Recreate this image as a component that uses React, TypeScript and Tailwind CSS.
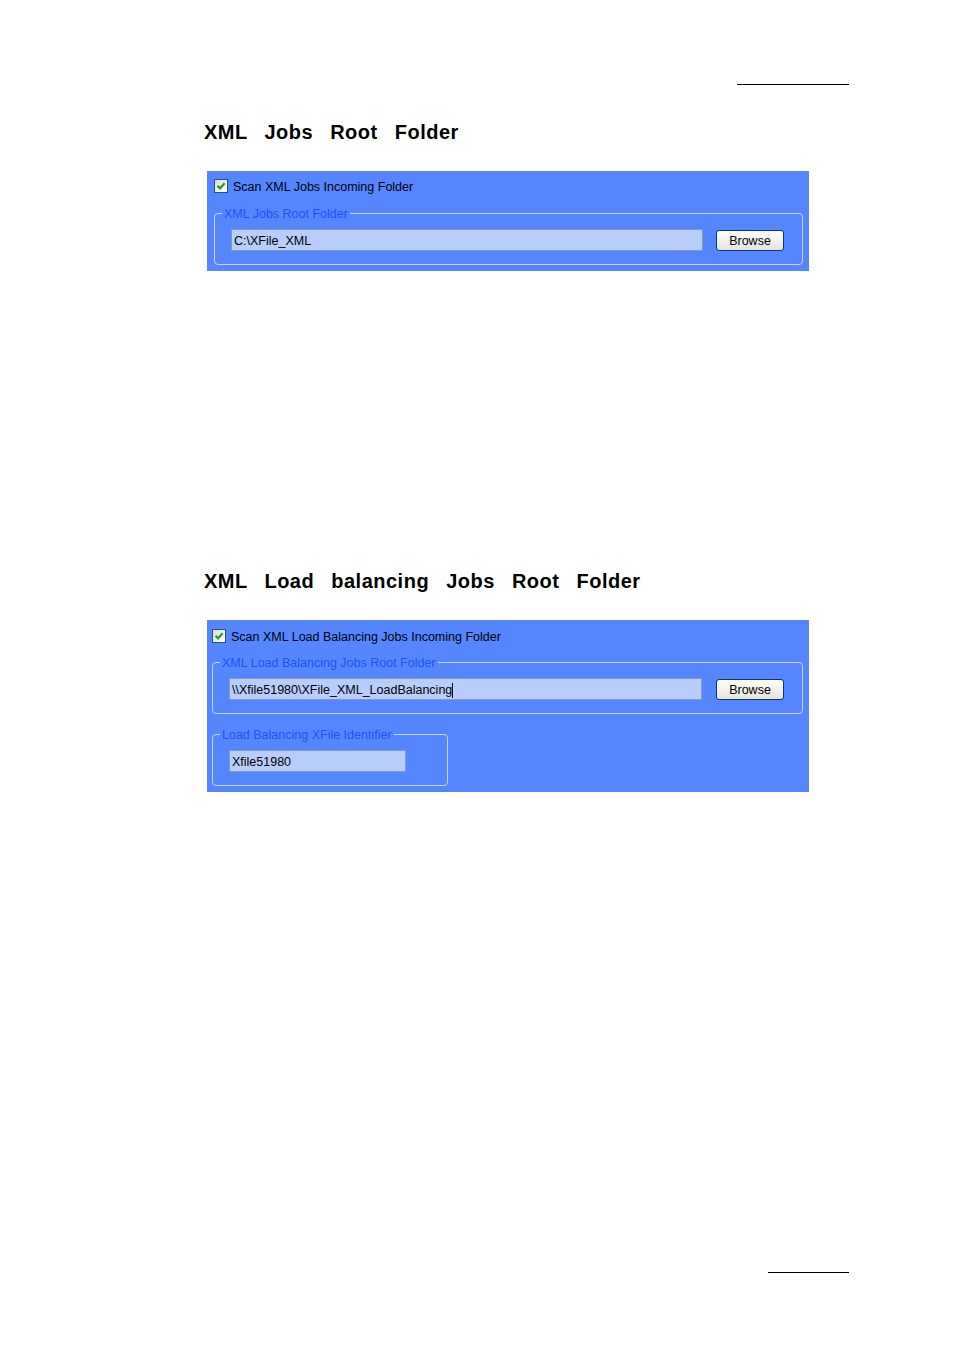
import React from 'react';

const PANEL_BG = 'bg-[#5586ff]';

const Checkbox: React.FC = () => (
  <div className="w-[14px] h-[14px] shrink-0 border border-[#1c5180] bg-gradient-to-br from-[#dcdcd6] to-white flex items-center justify-center">
    <svg width="10" height="10" viewBox="0 0 10 10">
      <path d="M1.5 4.8 L4 7.3 L8.6 2.3" stroke="#21a121" strokeWidth="2.2" fill="none" />
    </svg>
  </div>
);

const TextBox: React.FC<{ value: string; width: string; caret?: boolean }> = ({ value, width, caret }) => (
  <div className={`${width} h-[22px] shrink-0 bg-[#b9cdfb] border border-[#7f9db9] pl-[2px] pt-[2px] flex items-center text-[12.5px] text-black`}>
    <span>{value}</span>
    {caret && <span className="w-px h-[15px] bg-black" />}
  </div>
);

const BrowseButton: React.FC = () => (
  <button className="mt-px w-[68px] h-[21px] shrink-0 rounded-[3px] border border-[#003c74] bg-gradient-to-b from-white to-[#e6e3d6] pt-[2px] text-[12.5px] text-black flex items-center justify-center">
    Browse
  </button>
);

const Group: React.FC<{ legend: string; className: string; children: React.ReactNode }> = ({ legend, className, children }) => (
  <div className={`relative h-[52px] border border-[#c8d4ee] rounded-[4px] pl-[16px] pt-[15px] ${className}`}>
    <span className={`absolute left-[7px] top-[-7px] px-[2px] ${PANEL_BG} text-[12.5px] leading-[14px] text-[#2052f6]`}>{legend}</span>
    <div className="flex items-start">{children}</div>
  </div>
);

const Heading: React.FC<{ text: string; className: string }> = ({ text, className }) => (
  <h2 className={`ml-[204px] text-[20px] leading-[24px] font-bold text-black tracking-[0.5px] [word-spacing:11px] ${className}`}>{text}</h2>
);

export default function App() {
  return (
    <div className="w-[954px] min-h-[1350px] bg-white pt-[84px] font-['Liberation_Sans',Arial,sans-serif]">
      <div className="ml-[737px] w-[112px] h-px bg-black" />

      <Heading text="XML Jobs Root Folder" className="mt-[35px]" />

      <div className={`mt-[27px] ml-[207px] w-[602px] h-[100px] ${PANEL_BG} pt-[8px]`}>
        <div className="pl-[7px] flex items-center gap-[5px] h-[14px]">
          <Checkbox />
          <span className="pt-[3px] text-[12.5px] text-black">Scan XML Jobs Incoming Folder</span>
        </div>
        <Group legend="XML Jobs Root Folder" className="mt-[20px] ml-[7px] mr-[6px]">
          <TextBox value="C:\XFile_XML" width="w-[472px]" />
          <div className="ml-[13px]">
            <BrowseButton />
          </div>
        </Group>
      </div>

      <Heading text="XML Load balancing Jobs Root Folder" className="mt-[298px]" />

      <div className={`mt-[27px] ml-[207px] w-[602px] h-[172px] ${PANEL_BG} pt-[9px]`}>
        <div className="pl-[5px] flex items-center gap-[5px] h-[14px]">
          <Checkbox />
          <span className="pt-[3px] text-[12.5px] text-black">Scan XML Load Balancing Jobs Incoming Folder</span>
        </div>
        <Group legend="XML Load Balancing Jobs Root Folder" className="mt-[19px] ml-[5px] mr-[6px]">
          <TextBox value="\\Xfile51980\XFile_XML_LoadBalancing" width="w-[473px]" caret />
          <div className="ml-[14px]">
            <BrowseButton />
          </div>
        </Group>
        <Group legend="Load Balancing XFile Identifier" className="mt-[20px] ml-[5px] w-[236px]">
          <TextBox value="Xfile51980" width="w-[177px]" />
        </Group>
      </div>

      <div className="mt-[480px] ml-[768px] w-[81px] h-px bg-black" />
    </div>
  );
}
